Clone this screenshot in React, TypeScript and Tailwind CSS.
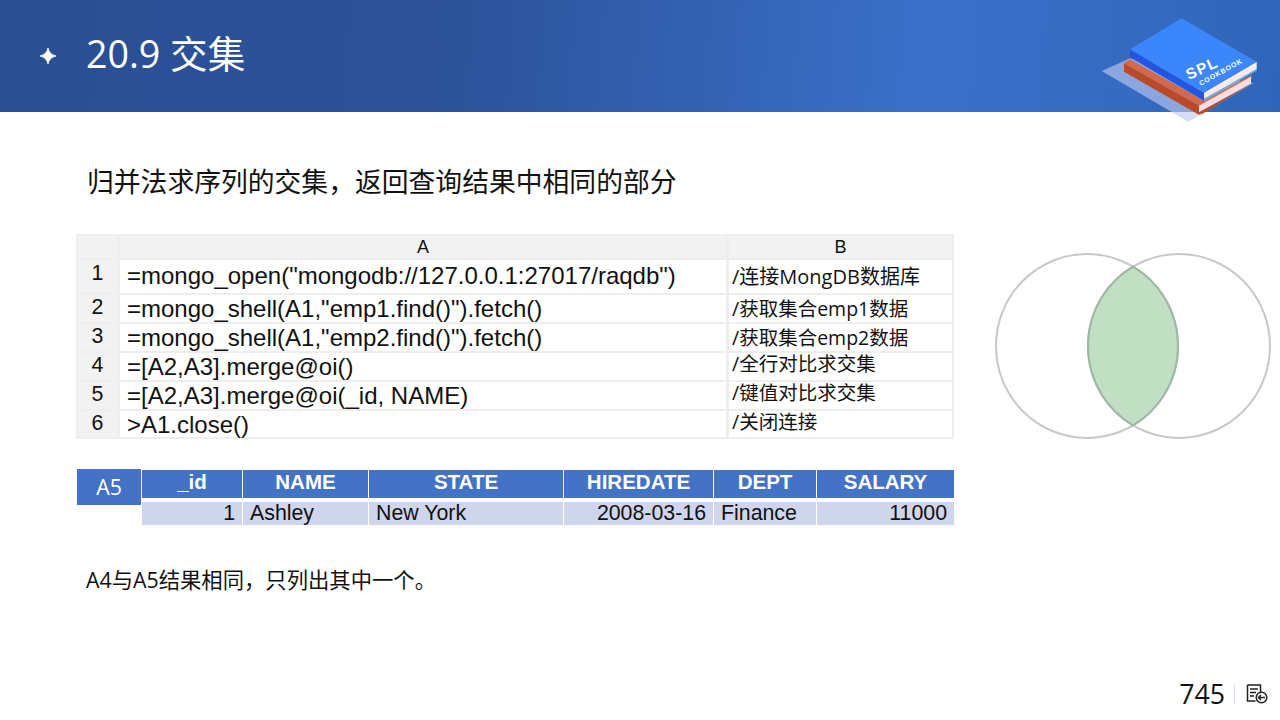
import React from 'react';

const sans = 'font-["Liberation_Sans","Noto_Sans_CJK_SC",sans-serif]';
const yahei = 'font-["Open_Sans","Noto_Sans_CJK_SC",sans-serif]';

const codeRows = [
  { n: '1', h: 'h-[33px]', nLead: 'leading-[26px]', aLead: 'leading-[32px]', a: '=mongo_open("mongodb://127.0.0.1:27017/raqdb")', b: '/连接MongDB数据库', bStyle: 'text-[20px] leading-[34px]' },
  { n: '2', h: 'h-[27px]', nLead: 'leading-[24px]', aLead: 'leading-[28px]', a: '=mongo_shell(A1,"emp1.find()").fetch()', b: '/获取集合emp1数据', bStyle: 'text-[19.5px] leading-[28px]' },
  { n: '3', h: 'h-[27px]', nLead: 'leading-[24px]', aLead: 'leading-[28px]', a: '=mongo_shell(A1,"emp2.find()").fetch()', b: '/获取集合emp2数据', bStyle: 'text-[19.5px] leading-[28px]' },
  { n: '4', h: 'h-[27px]', nLead: 'leading-[24px]', aLead: 'leading-[28px]', a: '=[A2,A3].merge@oi()', b: '/全行对比求交集', bStyle: 'text-[19.5px] leading-[22px]' },
  { n: '5', h: 'h-[27px]', nLead: 'leading-[24px]', aLead: 'leading-[28px]', a: '=[A2,A3].merge@oi(_id, NAME)', b: '/键值对比求交集', bStyle: 'text-[19.5px] leading-[22px]' },
  { n: '6', h: 'h-[26px]', nLead: 'leading-[24px]', aLead: 'leading-[28px]', a: '>A1.close()', b: '/关闭连接', bStyle: 'text-[19.5px] leading-[22px]' },
];

const resultCols = [
  { name: '_id', w: 'w-[100px]', val: '1', align: 'text-right' },
  { name: 'NAME', w: 'w-[125px]', val: 'Ashley', align: 'text-left' },
  { name: 'STATE', w: 'w-[194px]', val: 'New York', align: 'text-left' },
  { name: 'HIREDATE', w: 'w-[149px]', val: '2008-03-16', align: 'text-right' },
  { name: 'DEPT', w: 'w-[102px]', val: 'Finance', align: 'text-left' },
  { name: 'SALARY', w: 'w-[137px]', val: '11000', align: 'text-right' },
];

function BookLogo() {
  return (
    <svg className="absolute left-[1080px] top-0" width="200" height="130" viewBox="0 0 600 390">
      <polygon points="65,213 150,175 520,250 325,365" fill="#bdc8f0" fillOpacity="0.64" />
      {/* red book */}
      <polygon points="132,190 150,178 372,302 515,225 515,238 357,317" fill="#d2694a" />
      <polygon points="132,190 357,317 357,344 132,215" fill="#b84a2a" />
      <polygon points="357,317 513,230 513,250 357,337" fill="#fbdfe0" />
      <polygon points="357,337 518,250 370,340 357,344" fill="#b84a2a" />
      {/* blue book */}
      <polygon points="372,296 530,207 530,212 372,304" fill="#62aeee" />
      <polygon points="372,278 530,185 530,207 372,296" fill="#fdeae6" />
      <polygon points="150,148 372,278 372,302 150,172" fill="#2356e0" />
      <polygon points="305,55 530,185 372,278 150,148" fill="#3b86fb" />
      <text x="0" y="0" transform="translate(326,240) rotate(-24)" fill="#fff" fontSize="46" fontWeight="700" fontFamily="Liberation Sans, sans-serif" letterSpacing="4">SPL</text>
      <text x="0" y="0" transform="translate(362,258) rotate(-29)" fill="#fff" fontSize="21" fontWeight="700" fontFamily="Liberation Sans, sans-serif" letterSpacing="2.5">COOKBOOK</text>
    </svg>
  );
}

function Venn() {
  return (
    <svg className="shrink-0" width="290" height="200" viewBox="0 0 290 200">
      <ellipse cx="102" cy="101" rx="91" ry="92" fill="none" stroke="#c8c8c8" strokeWidth="2" />
      <ellipse cx="194" cy="101" rx="91" ry="92" fill="none" stroke="#c8c8c8" strokeWidth="2" />
      <path d="M148 21.6 A91 92 0 0 1 148 180.4 A91 92 0 0 1 148 21.6 Z" fill="#c0dfc3" stroke="#9db8a2" strokeWidth="2" />
    </svg>
  );
}

function Sparkle() {
  return (
    <svg width="16" height="16" viewBox="0 0 16 16" fill="#fff">
      <path d="M8 0C9 4 11 6.6 16 8C11 9.4 9 12 8 16C7 12 5 9.4 0 8C5 6.6 7 4 8 0Z" stroke="#fff" strokeWidth="0.8" strokeLinejoin="round" />
    </svg>
  );
}

function ReturnDocIcon() {
  return (
    <svg width="22" height="20" viewBox="0 0 22 20" fill="none" stroke="#222" strokeWidth="1.5">
      <path d="M1.5 1h13v8M1.5 1v16h8" />
      <path d="M4 5h8M4 8.5h6M4 12h4" />
      <circle cx="15.5" cy="13.5" r="5.3" />
      <path d="M19 13.5h-6.5M15 11l-2.5 2.5L15 16" />
    </svg>
  );
}

export default function App() {
  return (
    <div className={`relative h-[720px] w-[1280px] overflow-hidden bg-white ${sans}`}>
      <header className="flex h-[112px] items-center bg-[linear-gradient(95deg,#2a4f93_0%,#2c5299_35%,#3a70c9_72%,#3066b9_100%)] text-white">
        <span className="ml-[40px] w-[46px]"><Sparkle /></span>
        <h1 className={`mb-[5px] text-[37.6px] leading-none ${yahei}`}>20.9 交集</h1>
      </header>
      <BookLogo />

      <p className={`ml-[87px] mt-[51px] whitespace-nowrap text-[26.8px] leading-[38px] text-[#111] ${yahei}`}>
        归并法求序列的交集，返回查询结果中相同的部分
      </p>

      <div className="mt-[33px] flex items-start">
        {/* code grid */}
        <div className="ml-[76px] grid w-[878px] shrink-0 grid-cols-[39px_606px_1fr] gap-x-[3px] gap-y-[2px] bg-[#eeeeee] p-[2px] text-[#111]">
          <div className="h-[22px] bg-[#f2f2f2]" />
          <div className="flex h-[22px] items-center justify-center bg-[#f2f2f2] text-[18px]">A</div>
          <div className="flex h-[22px] items-center justify-center bg-[#f2f2f2] text-[18px]">B</div>
          {codeRows.map(r => (
            <React.Fragment key={r.n}>
              <div className={`${r.h} ${r.nLead} bg-[#f2f2f2] text-center text-[21.33px]`}>{r.n}</div>
              <div className={`${r.h} ${r.aLead} whitespace-nowrap bg-white pl-[7px] text-[24px]`}>{r.a}</div>
              <div className={`${r.h} whitespace-nowrap bg-white pl-[3px] ${r.bStyle} ${yahei}`}>{r.b}</div>
            </React.Fragment>
          ))}
        </div>
        <div className="ml-[31px] mt-[11px]">
          <Venn />
        </div>
      </div>

      {/* A5 result */}
      <div className="ml-[77px] mt-[24px] flex items-start">
        <div className={`mr-px flex h-[36px] w-[64px] items-center justify-center bg-[#4472c4] text-[21.33px] text-white ${yahei}`}>A5</div>
        <div className="mt-px flex gap-px">
          {resultCols.map(c => (
            <div key={c.name} className={`${c.w} flex flex-col`}>
              <div className="flex h-[28px] items-center justify-center bg-[#4472c4] pb-[3px] text-[20.5px] font-bold text-white">{c.name}</div>
              <div className={`mt-[4px] h-[23px] whitespace-nowrap bg-[#cfd5ea] px-[7px] text-[21.33px] leading-[23px] text-[#111] ${c.align}`}>{c.val}</div>
            </div>
          ))}
        </div>
      </div>

      <p className={`ml-[86px] mt-[40px] whitespace-nowrap text-[21.33px] leading-[30px] text-[#111] ${yahei}`}>A4与A5结果相同，只列出其中一个。</p>

      <footer className="absolute bottom-[10px] right-[12px] flex items-center">
        <span className={`text-[26.67px] leading-[32px] text-[#111] ${yahei}`}>745</span>
        <span className="ml-[9px] mr-[11px] h-[20px] w-px bg-[#d5deef]" />
        <ReturnDocIcon />
      </footer>
    </div>
  );
}
